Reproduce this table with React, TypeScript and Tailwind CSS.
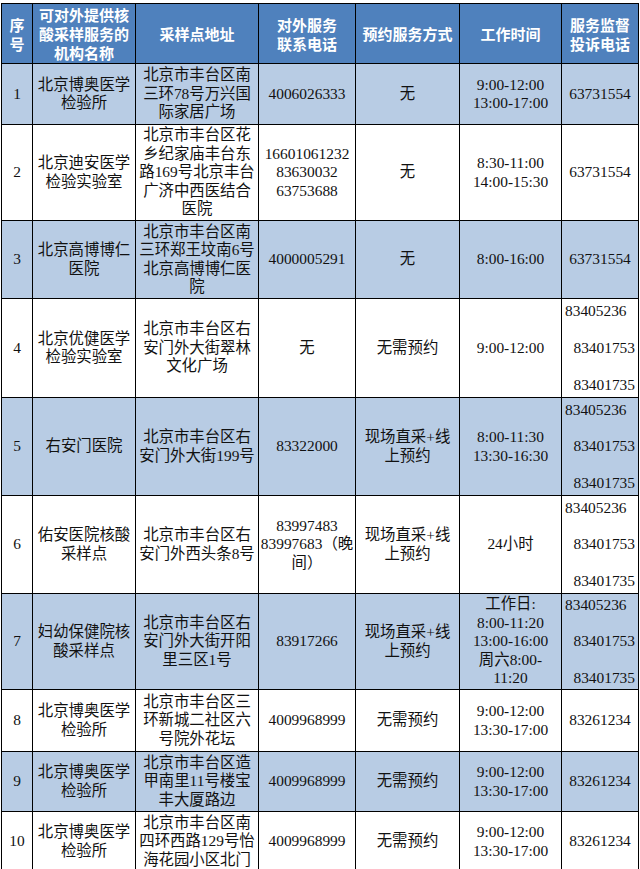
import React from 'react';

type Row = {
  no: string;
  name: string[];
  addr: string[];
  phone: string[];
  mode: string[];
  time: string[];
  complaint: string[];
  h: string;
};

const rows: Row[] = [
  { no: '1', name: ['北京博奥医学', '检验所'], addr: ['北京市丰台区南', '三环78号万兴国', '际家居广场'], phone: ['4006026333'], mode: ['无'], time: ['9:00-12:00', '13:00-17:00'], complaint: ['63731554'], h: 'h-[61px]' },
  { no: '2', name: ['北京迪安医学', '检验实验室'], addr: ['北京市丰台区花', '乡纪家庙丰台东', '路169号北京丰台', '广济中西医结合', '医院'], phone: ['16601061232', '83630032', '63753688'], mode: ['无'], time: ['8:30-11:00', '14:00-15:30'], complaint: ['63731554'], h: 'h-[96px]' },
  { no: '3', name: ['北京高博博仁', '医院'], addr: ['北京市丰台区南', '三环郑王坟南6号', '北京高博博仁医', '院'], phone: ['4000005291'], mode: ['无'], time: ['8:00-16:00'], complaint: ['63731554'], h: 'h-[78px]' },
  { no: '4', name: ['北京优健医学', '检验实验室'], addr: ['北京市丰台区右', '安门外大街翠林', '文化广场'], phone: ['无'], mode: ['无需预约'], time: ['9:00-12:00'], complaint: ['83405236', '83401753', '83401735'], h: 'h-[99px]' },
  { no: '5', name: ['右安门医院'], addr: ['北京市丰台区右', '安门外大街199号'], phone: ['83322000'], mode: ['现场直采+线', '上预约'], time: ['8:00-11:30', '13:30-16:30'], complaint: ['83405236', '83401753', '83401735'], h: 'h-[98px]' },
  { no: '6', name: ['佑安医院核酸', '采样点'], addr: ['北京市丰台区右', '安门外西头条8号'], phone: ['83997483', '83997683（晚', '间）'], mode: ['现场直采+线', '上预约'], time: ['24小时'], complaint: ['83405236', '83401753', '83401735'], h: 'h-[98px]' },
  { no: '7', name: ['妇幼保健院核', '酸采样点'], addr: ['北京市丰台区右', '安门外大街开阳', '里三区1号'], phone: ['83917266'], mode: ['现场直采+线', '上预约'], time: ['工作日:', '8:00-11:20', '13:00-16:00', '周六8:00-', '11:20'], complaint: ['83405236', '83401753', '83401735'], h: 'h-[96px]' },
  { no: '8', name: ['北京博奥医学', '检验所'], addr: ['北京市丰台区三', '环新城二社区六', '号院外花坛'], phone: ['4009968999'], mode: ['无需预约'], time: ['9:00-12:00', '13:30-17:00'], complaint: ['83261234'], h: 'h-[62px]' },
  { no: '9', name: ['北京博奥医学', '检验所'], addr: ['北京市丰台区造', '甲南里11号楼宝', '丰大厦路边'], phone: ['4009968999'], mode: ['无需预约'], time: ['9:00-12:00', '13:30-17:00'], complaint: ['83261234'], h: 'h-[60px]' },
  { no: '10', name: ['北京博奥医学', '检验所'], addr: ['北京市丰台区南', '四环西路129号怡', '海花园小区北门'], phone: ['4009968999'], mode: ['无需预约'], time: ['9:00-12:00', '13:30-17:00'], complaint: ['83261234'], h: 'h-[60px]' },
];

function Lines({ lines }: { lines: string[] }) {
  return (
    <>
      {lines.map((l, i) => (
        <div key={i} className="whitespace-nowrap">{l}</div>
      ))}
    </>
  );
}

function Complaint({ lines }: { lines: string[] }) {
  if (lines.length === 1) return <Lines lines={lines} />;
  return (
    <div className="flex h-[92px] flex-col justify-between">
      <div className="pl-[3px] text-left">{lines[0]}</div>
      <div className="pr-[3px] text-right">{lines[1]}</div>
      <div className="pr-[3px] text-right">{lines[2]}</div>
    </div>
  );
}

const th = 'border-[1.5px] border-black px-0 align-middle text-center';
const td = 'border-[1.5px] border-black px-0 align-middle text-center';

export default function App() {
  return (
    <div className="min-h-[869px] overflow-hidden bg-white pl-[1px] pt-[3px]">
      <table className="table-fixed border-collapse font-['Liberation_Serif','Noto_Sans_CJK_SC',serif] text-[15.4px] leading-[18.5px] text-[#111]">
        <colgroup>
          <col className="w-[31px]" />
          <col className="w-[103px]" />
          <col className="w-[123px]" />
          <col className="w-[97px]" />
          <col className="w-[104px]" />
          <col className="w-[102px]" />
          <col className="w-[77px]" />
        </colgroup>
        <thead>
          <tr className="h-[60px] bg-[#4f81bd] font-['Noto_Sans_CJK_SC',sans-serif] text-[15px] font-bold leading-[19px] text-white">
            <th className={th}><Lines lines={['序', '号']} /></th>
            <th className={th}><Lines lines={['可对外提供核', '酸采样服务的', '机构名称']} /></th>
            <th className={th}>采样点地址</th>
            <th className={th}><Lines lines={['对外服务', '联系电话']} /></th>
            <th className={th}>预约服务方式</th>
            <th className={th}>工作时间</th>
            <th className={th}><Lines lines={['服务监督', '投诉电话']} /></th>
          </tr>
        </thead>
        <tbody>
          {rows.map((r, i) => (
            <tr key={r.no} className={`${r.h} ${i % 2 === 0 ? 'bg-[#b8cce4]' : 'bg-white'}`}>
              <td className={td}>{r.no}</td>
              <td className={td}><Lines lines={r.name} /></td>
              <td className={td}><Lines lines={r.addr} /></td>
              <td className={td}><Lines lines={r.phone} /></td>
              <td className={td}><Lines lines={r.mode} /></td>
              <td className={td}><Lines lines={r.time} /></td>
              <td className={td}><Complaint lines={r.complaint} /></td>
            </tr>
          ))}
        </tbody>
      </table>
    </div>
  );
}
